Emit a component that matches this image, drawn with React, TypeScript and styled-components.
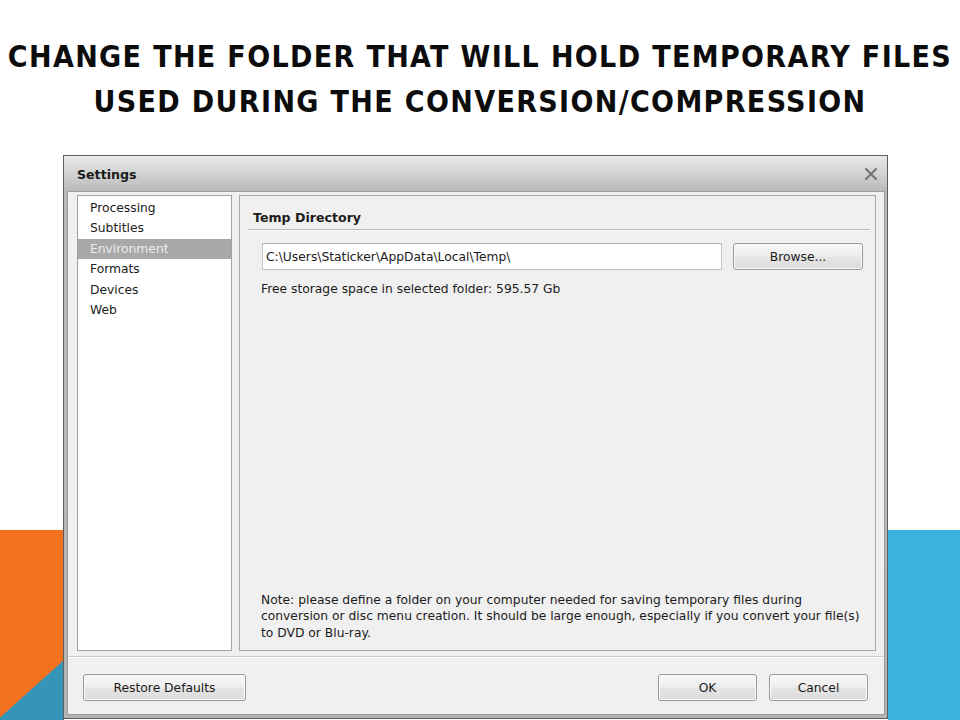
import React, { useState } from "react";
import styled, { createGlobalStyle } from "styled-components";

const GlobalStyle = createGlobalStyle`
  html, body {
    margin: 0;
    padding: 0;
    background: #ffffff;
  }
`;

const Slide = styled.div`
  position: relative;
  width: 960px;
  height: 720px;
  overflow: hidden;
  background: #ffffff;
`;

const OrangeBlock = styled.div`
  position: absolute;
  left: 0;
  bottom: 0;
  width: 64px;
  height: 190px;
  background: #f4721f;
`;

const TealCorner = styled.div`
  position: absolute;
  left: 0;
  bottom: 0;
  width: 64px;
  height: 60px;
  background: #3495b9;
  clip-path: polygon(100% 0, 100% 100%, 0 100%, 0 96%);
`;

const BlueBlock = styled.div`
  position: absolute;
  right: 0;
  bottom: 0;
  width: 72px;
  height: 190px;
  background: #3ab2de;
`;

const Heading = styled.h1`
  position: relative;
  margin: 0;
  padding-top: 34px;
  font-family: "DejaVu Sans Condensed", "DejaVu Sans", sans-serif;
  font-stretch: condensed;
  font-weight: bold;
  font-size: 30px;
  line-height: 45px;
  letter-spacing: 1.35px;
  text-align: center;
  color: #0c0c0c;
  text-transform: uppercase;
`;

const Dialog = styled.div`
  position: relative;
  margin: 31px 0 0 63px;
  width: 825px;
  height: 564px;
  box-sizing: border-box;
  border: 1px solid #5e5e5e;
  background: linear-gradient(#e9e9e9 0, #d2d2d2 18px, #bababa 35px, #b4b4b4 100%);
  display: flex;
  flex-direction: column;
  font-family: "DejaVu Sans", sans-serif;
  font-size: 12.3px;
  color: #1c1c1c;
`;

const TitleBar = styled.div`
  height: 35px;
  display: flex;
  align-items: center;
  justify-content: space-between;
  padding: 0 8px 0 13px;
`;

const TitleText = styled.span`
  font-weight: bold;
  font-size: 12.6px;
  color: #1a1a1a;
  margin-top: 2px;
`;

const CloseButton = styled.button`
  border: none;
  background: none;
  padding: 0;
  width: 16px;
  height: 16px;
  display: flex;
  align-items: center;
  justify-content: center;
`;

const Body = styled.div`
  flex: 1;
  margin: 0 2px 3px 3px;
  border: 1px solid #9c9c9c;
  background: #f0f0f0;
  display: flex;
  flex-direction: column;
`;

const ContentRow = styled.div`
  display: flex;
  gap: 7px;
  height: 456px;
  padding: 3px 8px 0 9px;
`;

const Sidebar = styled.ul`
  list-style: none;
  margin: 0;
  width: 155px;
  box-sizing: border-box;
  padding: 1.5px 0 0;
  background: #ffffff;
  border: 1px solid #a3a3a3;
`;

const SideItem = styled.li<{ $active?: boolean }>`
  height: 20.5px;
  line-height: 20.5px;
  padding-left: 12px;
  cursor: default;
  background: ${({ $active }) => ($active ? "#a8a8a8" : "transparent")};
  color: ${({ $active }) => ($active ? "#ececec" : "#1c1c1c")};
`;

const Panel = styled.div`
  flex: 1;
  box-sizing: border-box;
  border: 1px solid #a8a8a8;
  background: #f0f0f0;
  display: flex;
  flex-direction: column;
`;

const SectionHeader = styled.div`
  margin: 11px 5px 0 8px;
  padding-left: 5px;
  height: 22px;
  line-height: 22px;
  font-weight: bold;
  font-size: 12.6px;
  border-bottom: 1px solid #b9b9b9;
  box-shadow: 0 1px 0 #fbfbfb;
`;

const PathRow = styled.div`
  display: flex;
  gap: 11px;
  margin-top: 13px;
  padding-left: 22px;
`;

const PathInput = styled.input`
  width: 460px;
  height: 27px;
  box-sizing: border-box;
  border: 1px solid #c4c4c4;
  border-top-color: #b0b0b0;
  background: #ffffff;
  padding: 0 3px;
  font-family: "DejaVu Sans", sans-serif;
  font-size: 12.3px;
  color: #1c1c1c;
  outline: none;
`;

const WinButton = styled.button<{ $width: number }>`
  width: ${({ $width }) => $width}px;
  height: 27px;
  box-sizing: border-box;
  border: 1px solid #9a9a9a;
  border-radius: 3px;
  background: linear-gradient(#f7f7f7 0%, #efefef 45%, #e4e4e4 55%, #dcdcdc 100%);
  box-shadow: inset 0 0 0 1px #fbfbfb;
  font-family: "DejaVu Sans", sans-serif;
  font-size: 12.3px;
  color: #1c1c1c;
  padding: 0;
  cursor: default;
`;

const InfoText = styled.div`
  margin-top: 11px;
  padding-left: 21px;
  line-height: 16px;
`;

const Note = styled.p`
  margin: auto 0 0;
  padding: 0 10px 9px 21px;
  line-height: 16.5px;
`;

const Footer = styled.div`
  margin-top: 5px;
  border-top: 1px solid #c9c9c9;
  box-shadow: inset 0 1px 0 #fdfdfd;
  flex: 1;
  display: flex;
  align-items: flex-start;
  padding: 17px 16px 0 15px;
`;

const FooterRight = styled.div`
  margin-left: auto;
  display: flex;
  gap: 12px;
`;

const sections = ["Processing", "Subtitles", "Environment", "Formats", "Devices", "Web"];

const CloseIcon = () => (
  <svg width="14" height="14" viewBox="0 0 14 14">
    <path d="M2 2 L12 12 M12 2 L2 12" stroke="#767676" strokeWidth="2.2" strokeLinecap="round" />
  </svg>
);

const App: React.FC = () => {
  const [active, setActive] = useState<string>("Environment");
  const [path, setPath] = useState<string>("C:\\Users\\Staticker\\AppData\\Local\\Temp\\");

  return (
    <Slide>
      <GlobalStyle />
      <OrangeBlock />
      <TealCorner />
      <BlueBlock />
      <Heading>
        Change the folder that will hold temporary files
        <br />
        used during the conversion/compression
      </Heading>
      <Dialog>
        <TitleBar>
          <TitleText>Settings</TitleText>
          <CloseButton aria-label="Close">
            <CloseIcon />
          </CloseButton>
        </TitleBar>
        <Body>
          <ContentRow>
            <Sidebar>
              {sections.map((s) => (
                <SideItem key={s} $active={s === active} onClick={() => setActive(s)}>
                  {s}
                </SideItem>
              ))}
            </Sidebar>
            <Panel>
              <SectionHeader>Temp Directory</SectionHeader>
              <PathRow>
                <PathInput value={path} onChange={(e) => setPath(e.target.value)} />
                <WinButton $width={130}>Browse...</WinButton>
              </PathRow>
              <InfoText>Free storage space in selected folder: 595.57 Gb</InfoText>
              <Note>
                Note: please define a folder on your computer needed for saving temporary files during
                <br />
                conversion or disc menu creation. It should be large enough, especially if you convert your file(s)
                <br />
                to DVD or Blu-ray.
              </Note>
            </Panel>
          </ContentRow>
          <Footer>
            <WinButton $width={163}>Restore Defaults</WinButton>
            <FooterRight>
              <WinButton $width={99}>OK</WinButton>
              <WinButton $width={99}>Cancel</WinButton>
            </FooterRight>
          </Footer>
        </Body>
      </Dialog>
    </Slide>
  );
};

export default App;
